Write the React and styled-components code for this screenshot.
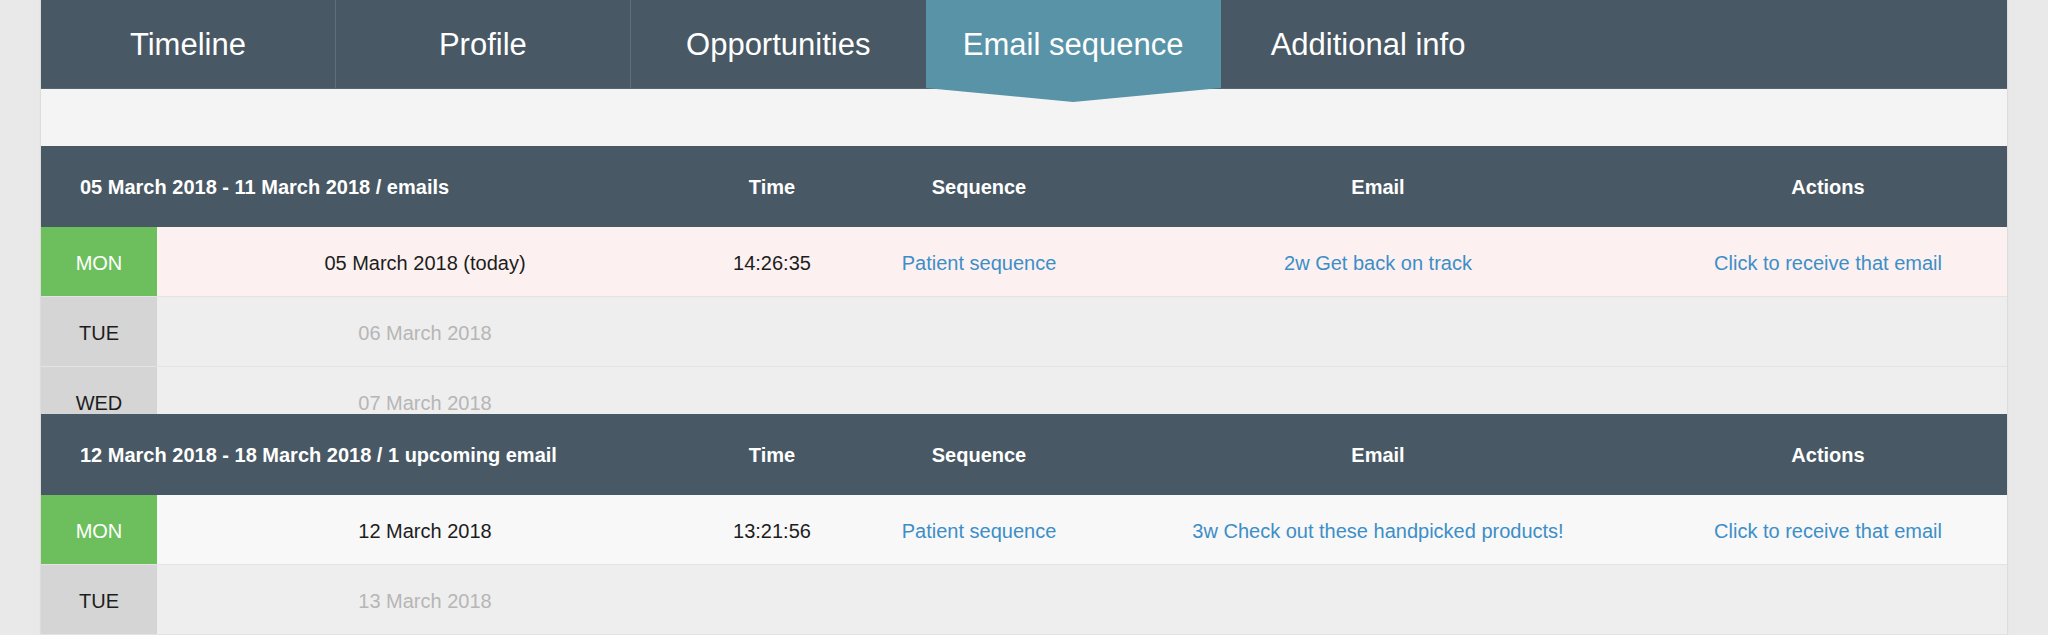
import React from "react";
import styled, { createGlobalStyle } from "styled-components";

const GlobalStyle = createGlobalStyle`
  body {
    margin: 0;
    background: #e9e9e9;
    font-family: "Liberation Sans", Arial, sans-serif;
  }
`;

const StyledPage = styled.div`
  padding: 0 41px;
  height: 635px;
  overflow: hidden;
`;

const StyledPanel = styled.div`
  background: #f4f4f4;
  box-shadow: 0 0 2px rgba(0, 0, 0, 0.18);
  min-height: 635px;
`;

const StyledTabs = styled.div`
  display: flex;
  height: 89px;
  background: #485864;
  border-bottom: 1px solid #56656f;
  box-sizing: border-box;
`;

const StyledTab = styled.div`
  position: relative;
  width: 15%;
  display: flex;
  align-items: center;
  justify-content: center;
  padding-top: 2px;
  color: #fff;
  font-size: 31px;
  box-sizing: border-box;
  border-right: ${(p) => (p.$divider ? "1px solid #5f6e78" : "none")};
  background: ${(p) => (p.$active ? "#5893a8" : "transparent")};

  ${(p) =>
    p.$active &&
    `
    &::after {
      content: "";
      position: absolute;
      left: 0;
      right: 0;
      top: 100%;
      height: 14px;
      background: #5893a8;
      clip-path: polygon(0 0, 100% 0, 50% 100%);
    }
  `}
`;

const StyledSpacer = styled.div`
  height: 57px;
`;

const columns = "116px 536px 158px 256px 542px 1fr";

const StyledWeekHead = styled.div`
  display: grid;
  grid-template-columns: ${columns};
  height: 81px;
  padding-top: 2px;
  box-sizing: border-box;
  background: #485864;
  color: #fff;
  font-size: 20px;
  font-weight: bold;
  align-items: center;
  text-align: center;

  .range {
    grid-column: 1 / 3;
    text-align: left;
    padding-left: 39px;
  }
`;

const StyledWeekBody = styled.div`
  height: ${(p) => p.$height}px;
  overflow: hidden;
`;

const StyledRow = styled.div`
  display: grid;
  grid-template-columns: ${columns};
  height: 70px;
  box-sizing: border-box;
  border-bottom: 1px solid #e3e3e3;
  background: ${(p) => p.$bg};
  font-size: 20px;
  text-align: center;
  align-items: center;
  color: #1d1d1d;

  & > div {
    padding-top: 3px;
  }
`;

const StyledDay = styled.div`
  align-self: stretch;
  display: flex;
  align-items: center;
  justify-content: center;
  background: ${(p) => (p.$green ? "#6cbf5c" : "#d5d5d5")};
  color: ${(p) => (p.$green ? "#fff" : "#1d1d1d")};
`;

const StyledDate = styled.div`
  color: ${(p) => (p.$muted ? "#b6b6b6" : "#1d1d1d")};
`;

const StyledLink = styled.a`
  color: #3d8ec7;
  text-decoration: none;
  cursor: pointer;
`;

const tabs = [
  { label: "Timeline", divider: true },
  { label: "Profile", divider: true },
  { label: "Opportunities" },
  { label: "Email sequence", active: true },
  { label: "Additional info" },
];

const weeks = [
  {
    range: "05 March 2018 - 11 March 2018 / emails",
    height: 187,
    days: [
      {
        day: "MON",
        date: "05 March 2018 (today)",
        bg: "#fcf1f0",
        email: {
          time: "14:26:35",
          sequence: "Patient sequence",
          subject: "2w Get back on track",
        },
      },
      { day: "TUE", date: "06 March 2018" },
      { day: "WED", date: "07 March 2018" },
    ],
  },
  {
    range: "12 March 2018 - 18 March 2018 / 1 upcoming email",
    height: 140,
    days: [
      {
        day: "MON",
        date: "12 March 2018",
        bg: "#f8f8f8",
        email: {
          time: "13:21:56",
          sequence: "Patient sequence",
          subject: "3w Check out these handpicked products!",
        },
      },
      { day: "TUE", date: "13 March 2018" },
    ],
  },
];

const DayRow = ({ item }) => {
  const hasEmail = !!item.email;
  return (
    <StyledRow $bg={item.bg || "#eeeeee"}>
      <StyledDay $green={hasEmail}>{item.day}</StyledDay>
      <StyledDate $muted={!hasEmail}>{item.date}</StyledDate>
      <div>{hasEmail && item.email.time}</div>
      <div>{hasEmail && <StyledLink>{item.email.sequence}</StyledLink>}</div>
      <div>{hasEmail && <StyledLink>{item.email.subject}</StyledLink>}</div>
      <div>{hasEmail && <StyledLink>Click to receive that email</StyledLink>}</div>
    </StyledRow>
  );
};

const Week = ({ week }) => (
  <div>
    <StyledWeekHead>
      <div className="range">{week.range}</div>
      <div>Time</div>
      <div>Sequence</div>
      <div>Email</div>
      <div>Actions</div>
    </StyledWeekHead>
    <StyledWeekBody $height={week.height}>
      {week.days.map((d) => (
        <DayRow key={d.date} item={d} />
      ))}
    </StyledWeekBody>
  </div>
);

export default function App() {
  return (
    <StyledPage>
      <GlobalStyle />
      <StyledPanel>
        <StyledTabs>
          {tabs.map((t) => (
            <StyledTab key={t.label} $active={t.active} $divider={t.divider}>
              {t.label}
            </StyledTab>
          ))}
        </StyledTabs>
        <StyledSpacer />
        {weeks.map((w) => (
          <Week key={w.range} week={w} />
        ))}
      </StyledPanel>
    </StyledPage>
  );
}
